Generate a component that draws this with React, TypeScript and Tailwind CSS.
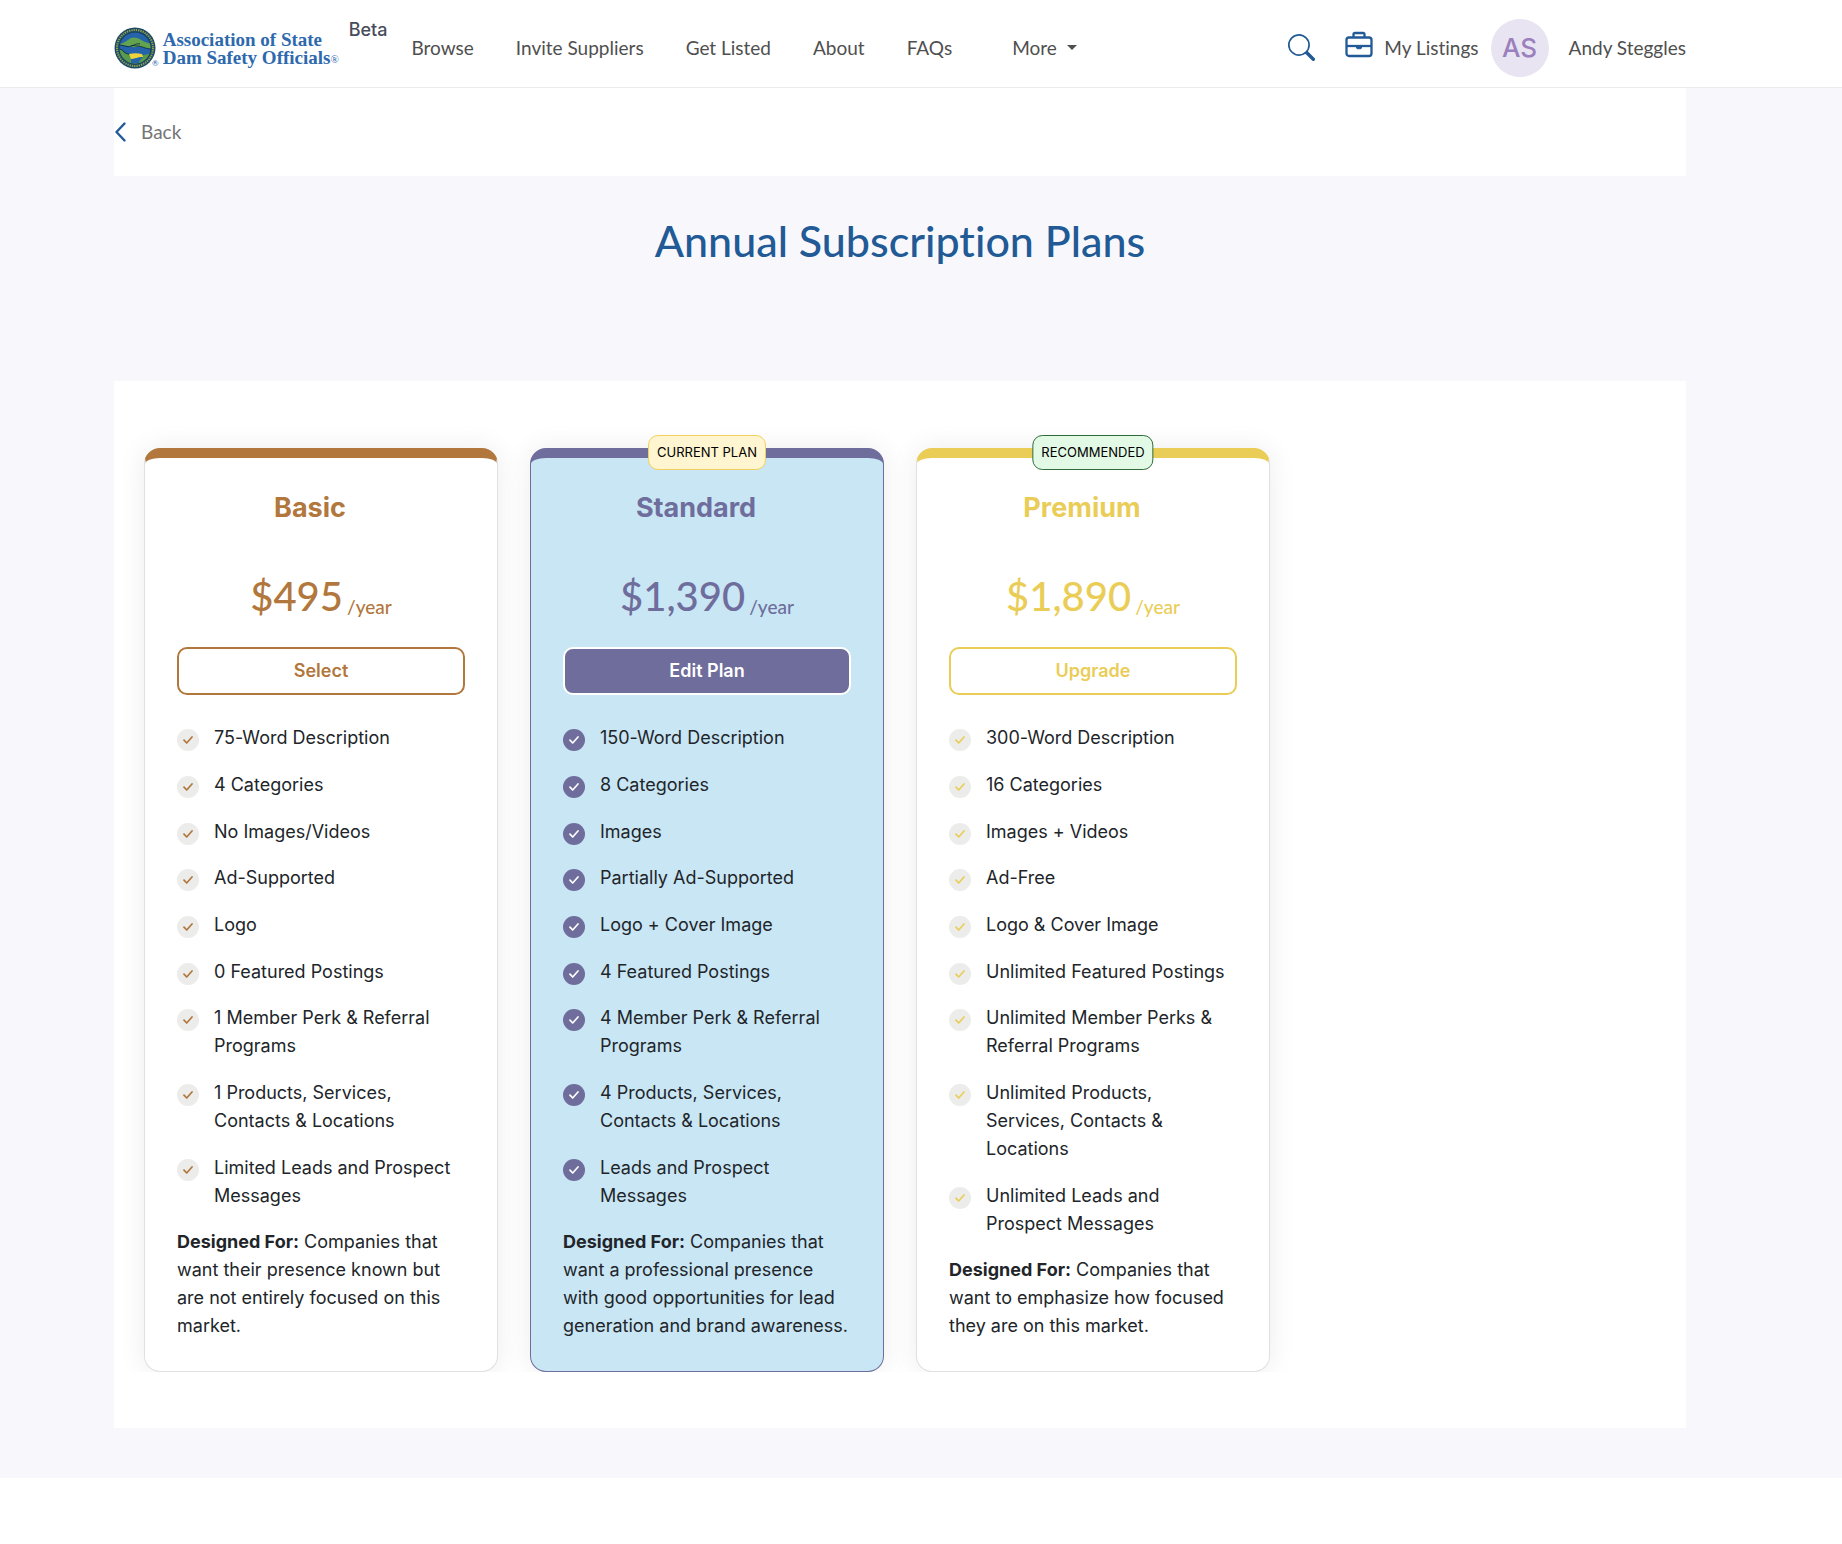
import React from "react";
import { BsSearch } from "react-icons/bs";

type Plan = {
  name: string;
  price: string;
  action: string;
  badge?: string;
  badgeClass?: string;
  text: string;
  card: string;
  button: string;
  tick: string;
  features: string[];
  audience: string;
};

const plans: Plan[] = [
  {
    name: "Basic",
    price: "$495",
    action: "Select",
    text: "text-[#b1773d]",
    card: "bg-white border-[#dee0e2] border-t-[#b1773d]",
    button: "border-[#b1773d] text-[#b1773d]",
    tick: "bg-[#ececeb] text-[#b1773d]",
    features: [
      "75-Word Description",
      "4 Categories",
      "No Images/Videos",
      "Ad-Supported",
      "Logo",
      "0 Featured Postings",
      "1 Member Perk & Referral Programs",
      "1 Products, Services, Contacts & Locations",
      "Limited Leads and Prospect Messages",
    ],
    audience:
      "Companies that want their presence known but are not entirely focused on this market.",
  },
  {
    name: "Standard",
    price: "$1,390",
    action: "Edit Plan",
    badge: "CURRENT PLAN",
    badgeClass: "bg-[#fff5d0] border-[#f3cf5b]",
    text: "text-[#6e6d9c]",
    card: "bg-[#c9e6f5] border-[#6e6d9c] border-t-[#6e6d9c]",
    button: "border-white bg-[#6e6d9c] text-white",
    tick: "bg-[#6e6d9c] text-white",
    features: [
      "150-Word Description",
      "8 Categories",
      "Images",
      "Partially Ad-Supported",
      "Logo + Cover Image",
      "4 Featured Postings",
      "4 Member Perk & Referral Programs",
      "4 Products, Services, Contacts & Locations",
      "Leads and Prospect Messages",
    ],
    audience:
      "Companies that want a professional presence with good opportunities for lead generation and brand awareness.",
  },
  {
    name: "Premium",
    price: "$1,890",
    action: "Upgrade",
    badge: "RECOMMENDED",
    badgeClass: "bg-[#e2f9e5] border-[#2f6b3a]",
    text: "text-[#eacd57]",
    card: "bg-white border-[#dee0e2] border-t-[#eacd57]",
    button: "border-[#eacd57] text-[#eacd57]",
    tick: "bg-[#ececeb] text-[#eacd57]",
    features: [
      "300-Word Description",
      "16 Categories",
      "Images + Videos",
      "Ad-Free",
      "Logo & Cover Image",
      "Unlimited Featured Postings",
      "Unlimited Member Perks & Referral Programs",
      "Unlimited Products, Services, Contacts & Locations",
      "Unlimited Leads and Prospect Messages",
    ],
    audience: "Companies that want to emphasize how focused they are on this market.",
  },
];

function Seal() {
  return (
    <svg viewBox="0 0 42 42" className="size-[42px] shrink-0" aria-hidden="true">
      <defs>
        <clipPath id="seal-inner">
          <circle cx="21" cy="21" r="15.5" />
        </clipPath>
      </defs>
      <circle cx="21" cy="21" r="20.5" fill="#1f4a66" />
      <circle cx="21" cy="21" r="18" fill="none" stroke="#8fa84e" strokeWidth="2" strokeDasharray="1.3 1" />
      <circle cx="21" cy="21" r="16" fill="#17384a" />
      <g clipPath="url(#seal-inner)">
        <rect x="5" y="5" width="32" height="32" fill="#2563ab" />
        <path d="M4 17c5 0 7-2 10-4 3-3 6-3 9-2 4 1 5 3 8 4l7 2v5c-6-1-9-1-12-3-4 1-7 2-11 0-4 0-7-1-11-2z" fill="#62a350" />
        <path d="M4 18c7 0 9 3 13 1 2-1 4 0 6 0 5 0 8 3 15 3M17 19c4-1 6-3 9-2" fill="none" stroke="#14303c" strokeWidth="0.9" />
        <path d="M4 22c3 0 5 1 6 3 2 2 6 2 8 4 6 0 14-1 20-3v13H4z" fill="#58994b" />
        <path d="M4 22c3 0 5 1 6 3 2 2 6 2 8 4" fill="none" stroke="#14303c" strokeWidth="0.9" />
        <path d="M15 27c4-1 9-1 13 0l1 3c-5 0-7 2-12 2z" fill="#ecd23c" />
        <path d="M17 32c4 0 7-2 12-2-1 2-4 3-4 6h-8z" fill="#2563ab" />
      </g>
    </svg>
  );
}

function BriefcaseIcon() {
  return (
    <svg viewBox="0 0 28 27" className="mb-1.5 h-[27px] w-[28px]" fill="none" stroke="currentColor" strokeWidth="2.3" strokeLinejoin="round" aria-hidden="true">
      <rect x="1.5" y="6.5" width="25" height="18.5" rx="2.5" />
      <path d="M8.5 6V3.5a1.5 1.5 0 0 1 1.5-1.5h8a1.5 1.5 0 0 1 1.5 1.5V6" />
      <path d="M2 15h24" />
      <path d="M11 15.5h6l-1 2.200h-4z" fill="currentColor" strokeWidth="1" />
    </svg>
  );
}

function BackIcon() {
  return (
    <svg viewBox="0 0 12 20" className="h-5 w-3 text-[#225a96]" fill="none" stroke="currentColor" strokeWidth="2.4" strokeLinecap="round" strokeLinejoin="round" aria-hidden="true">
      <path d="M10.500 1.500 2.500 10l8 8.500" />
    </svg>
  );
}

function Tick() {
  return (
    <svg viewBox="0 0 10 8" className="h-2 w-2.5" fill="none" stroke="currentColor" strokeWidth="1.7" strokeLinecap="round" strokeLinejoin="round" aria-hidden="true">
      <path d="M1 4.200 3.700 7 9 1" />
    </svg>
  );
}

function Header() {
  return (
    <header className="border-b border-[#ebebed] bg-white pr-[156px] pl-[114px] font-['Lato',sans-serif] text-[19px] leading-7 text-[#4f4f4f]">
      <div className="flex h-[87px] items-center">
        <a href="#" className="flex items-center pt-2 text-[#2e69ad]">
          <Seal />
          <span className="-ml-1 self-end text-[8px] leading-3">®</span>
          <span className="ml-1 w-[182px] pt-0.5 whitespace-nowrap font-['Liberation_Serif',serif] text-[19px] font-bold leading-[18px]">
            Association of State
            <br />
            Dam Safety Officials<span className="align-middle text-[11px] leading-none font-normal">®</span>
          </span>
        </a>
        <span className="ml-1 self-start pt-4 font-['Inter',sans-serif] text-[18px] font-medium text-[#484b5b]">Beta</span>
        <nav className="ml-6 flex items-center gap-[42px] pt-2 whitespace-nowrap">
          <a href="#">Browse</a>
          <a href="#">Invite Suppliers</a>
          <a href="#">Get Listed</a>
          <a href="#">About</a>
          <a href="#">FAQs</a>
          <button type="button" className="ml-[18px] flex items-center gap-2.5">
            More
            <span className="border-x-[5px] border-t-[5px] border-x-transparent" />
          </button>
        </nav>
        <div className="ml-auto flex items-center pt-2 whitespace-nowrap">
          <button type="button" aria-label="Search" className="text-[#225a96]">
            <BsSearch size={27} />
          </button>
          <a href="#" className="ml-[30px] flex items-center gap-[11px]">
            <span className="text-[#225a96]">
              <BriefcaseIcon />
            </span>
            My Listings
          </a>
          <a href="#" className="ml-3 flex items-center gap-5">
            <span className="flex size-[58px] items-center justify-center rounded-full bg-[#e8e4f1] font-['Inter',sans-serif] text-[26px] font-medium text-[#9a80bd]">
              AS
            </span>
            Andy Steggles
          </a>
        </div>
      </div>
    </header>
  );
}

function PlanCard({ plan }: { plan: Plan }) {
  return (
    <article
      className={`relative w-[354px] rounded-[16px] border border-t-[10px] px-8 pb-[31px] shadow-[0_0_28px_rgba(0,0,0,0.08)] ${plan.card}`}
    >
      {plan.badge && (
        <span
          className={`absolute -top-[23px] left-1/2 -translate-x-1/2 rounded-[10px] border px-2 py-2 text-[13px] leading-[17px] whitespace-nowrap text-black ${plan.badgeClass}`}
        >
          {plan.badge}
        </span>
      )}
      <h2 className={`pt-8 pr-[22px] text-center text-[27px] leading-9 font-bold ${plan.text}`}>{plan.name}</h2>
      <p className={`mt-10 text-center font-['Lato',sans-serif] text-[40px] leading-[60px] font-medium ${plan.text}`}>
        {plan.price}
        <span className="relative top-[3px] ml-1 text-[19px] leading-none font-medium">/year</span>
      </p>
      <button type="button" className={`mt-[21px] h-12 w-full rounded-[10px] border-2 text-[18px] font-semibold ${plan.button}`}>
        {plan.action}
      </button>
      <ul className="mt-[29px] pr-1.5">
        {plan.features.map((feature) => (
          <li key={feature} className="mb-[19px] flex gap-[15px] nth-[3n]:mb-[18px]">
            <span className={`mt-[5px] flex size-[22px] shrink-0 items-center justify-center rounded-full ${plan.tick}`}>
              <Tick />
            </span>
            <span>{feature}</span>
          </li>
        ))}
      </ul>
      <p>
        <strong className="font-bold">Designed For:</strong> {plan.audience}
      </p>
    </article>
  );
}

export default function App() {
  return (
    <div className="min-h-screen bg-white font-['Inter',sans-serif] text-[18px] leading-7 text-[#212529] [font-variant-ligatures:none]">
      <Header />
      <main className="bg-[#f8f8fc] pr-[156px] pb-[50px] pl-[114px]">
        <div className="flex bg-white py-[30px] font-['Lato',sans-serif] text-[19px] text-[#757575]">
          <a href="#" className="flex items-center gap-[15px]">
            <BackIcon />
            Back
          </a>
        </div>
        <h1 className="pt-[35px] pb-[110px] text-center font-['Lato',sans-serif] text-[43px] leading-[60px] font-medium text-[#225a96]">
          Annual Subscription Plans
        </h1>
        <section className="bg-white pb-14">
          <div className="flex flex-wrap gap-8 overflow-hidden px-[30px] pt-[67px]">
            {plans.map((plan) => (
              <PlanCard key={plan.name} plan={plan} />
            ))}
          </div>
        </section>
      </main>
    </div>
  );
}
